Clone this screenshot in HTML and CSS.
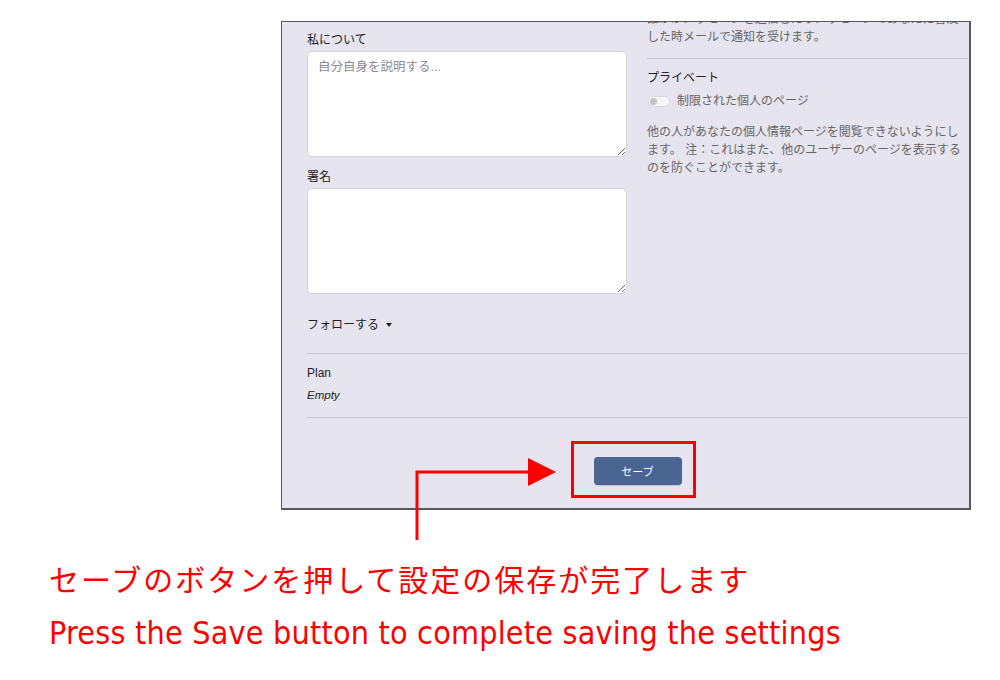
FILE: index.html
```html
<!DOCTYPE html>
<html lang="ja">
<head>
    <meta charset="UTF-8">
    <meta name="viewport" content="width=device-width, initial-scale=1.0">
    <title>プロフィール設定 - セーブ</title>
    <link rel="stylesheet" href="styles.css">
</head>
<body>
    <div class="page">
        <div class="shot">
            <div class="cols">
                <div class="col-left">
                    <label class="field-label" for="about">私について</label>
                    <textarea class="field-text" id="about" placeholder="自分自身を説明する..."></textarea>

                    <label class="field-label sig" for="signature">署名</label>
                    <textarea class="field-text" id="signature"></textarea>

                    <div class="follow">フォローする <span class="caret"></span></div>
                </div>

                <div class="col-right">
                    <p class="note">誰かがメッセージを送信したりメッセージであなたに言及した時メールで通知を受けます。</p>
                    <div class="private">
                        <div class="field-label">プライベート</div>
                        <label class="toggle-row">
                            <span class="toggle"><span class="knob"></span></span>
                            制限された個人のページ
                        </label>
                        <p class="note help">他の人があなたの個人情報ページを閲覧できないようにします。 注：これはまた、他のユーザーのページを表示するのを防ぐことができます。</p>
                    </div>
                </div>
            </div>

            <div class="plan">
                <div class="plan-title">Plan</div>
                <div class="plan-value">Empty</div>
            </div>

            <div class="actions">
                <button class="save-btn" type="button">セーブ</button>
            </div>
        </div>

        <!-- annotation overlay -->
        <div class="highlight"></div>
        <svg class="arrow" width="160" height="90" viewBox="0 0 160 90">
            <polyline points="2,88 2,20 120,20" fill="none" stroke="#ff0000" stroke-width="3"/>
            <polygon points="113,6 141,20 113,34" fill="#ff0000"/>
        </svg>

        <p class="caption-ja">セーブのボタンを押して設定の保存が完了します</p>
        <p class="caption-en">Press the Save button to complete saving the settings</p>
    </div>
</body>
</html>
```

FILE: styles.css
```css
body {
    margin: 0;
    background: #fff;
    font-family: "Liberation Sans", "Noto Sans CJK JP", sans-serif;
}
.page {
    position: relative;
    width: 1000px;
    height: 680px;
    padding-top: 21px;
    box-sizing: border-box;
}
.shot {
    margin-left: 281px;
    width: 690px;
    height: 489px;
    box-sizing: border-box;
    border: 1px solid #58575c;
    border-right-width: 2px;
    border-bottom-width: 2px;
    background: #e6e4ef;
    padding: 0 1px 0 25px;
    overflow: hidden;
    font-size: 12px;
    color: #222;
}
.cols {
    display: grid;
    grid-template-columns: 320px 1fr;
    column-gap: 20px;
}
.col-left {
    padding-top: 9px;
}
.field-label {
    display: block;
    line-height: 18px;
    color: #222;
}
.field-label.sig {
    margin-top: 11px;
}
.field-text {
    display: block;
    width: 320px;
    height: 106px;
    margin: 2px 0 0;
    padding: 6px 10px;
    box-sizing: border-box;
    border: 1px solid #d3d1dc;
    border-radius: 5px;
    background: #fff;
    font-family: inherit;
    font-size: 12.5px;
    line-height: 18px;
}
.field-text::placeholder {
    color: #8a8a8e;
}
.follow {
    margin-top: 22px;
    line-height: 18px;
    display: flex;
    align-items: center;
    gap: 4px;
}
.caret {
    width: 0;
    height: 0;
    border-left: 3.5px solid transparent;
    border-right: 3.5px solid transparent;
    border-top: 4px solid #222;
    margin-left: 3px;
}
.col-right {
    margin-top: -12px;
}
.note {
    margin: 0;
    line-height: 18px;
    color: #666;
}
.private {
    margin-top: 12px;
    border-top: 1px solid #c8c6d2;
    padding-top: 10px;
}
.toggle-row {
    display: flex;
    align-items: center;
    gap: 7px;
    margin-top: 5px;
    line-height: 18px;
    color: #666;
}
.toggle {
    position: relative;
    width: 22px;
    height: 11px;
    margin-left: 1px;
    box-sizing: border-box;
    border: 1px solid #d9d8de;
    border-radius: 6px;
    background: #f6f6f8;
}
.knob {
    position: absolute;
    left: 1px;
    top: 1px;
    width: 7px;
    height: 7px;
    border-radius: 50%;
    background: #c4c4c8;
}
.help {
    margin-top: 13px;
}
.plan {
    margin-top: 19px;
    border-top: 1px solid #c8c6d2;
    border-bottom: 1px solid #c8c6d2;
    padding: 8px 0 11px;
    line-height: 22px;
}
.plan-value {
    font-style: italic;
    font-size: 11.5px;
}
.actions {
    display: flex;
    justify-content: center;
    padding-top: 39px;
}
.save-btn {
    width: 88px;
    height: 28px;
    border: none;
    border-radius: 4px;
    background: #4b6592;
    color: #fff;
    font-family: inherit;
    font-size: 11px;
    box-shadow: 0 1px 1px rgba(0,0,0,0.15);
}
.highlight {
    position: absolute;
    left: 571px;
    top: 441px;
    width: 125px;
    height: 57px;
    box-sizing: border-box;
    border: 3px solid #ff0000;
}
.arrow {
    position: absolute;
    left: 415px;
    top: 452px;
}
.caption-ja {
    margin: 48px 0 0 49px;
    font-family: "Noto Sans CJK JP", sans-serif;
    font-size: 30px;
    line-height: 40px;
    letter-spacing: 2px;
    color: #ff0000;
}
.caption-en {
    margin: 15px 0 0 49px;
    font-family: "Liberation Sans Narrow", "DejaVu Sans Condensed", "Liberation Sans", sans-serif;
    font-size: 32px;
    line-height: 40px;
    letter-spacing: 0.2px;
    color: #ff0000;
}
```
